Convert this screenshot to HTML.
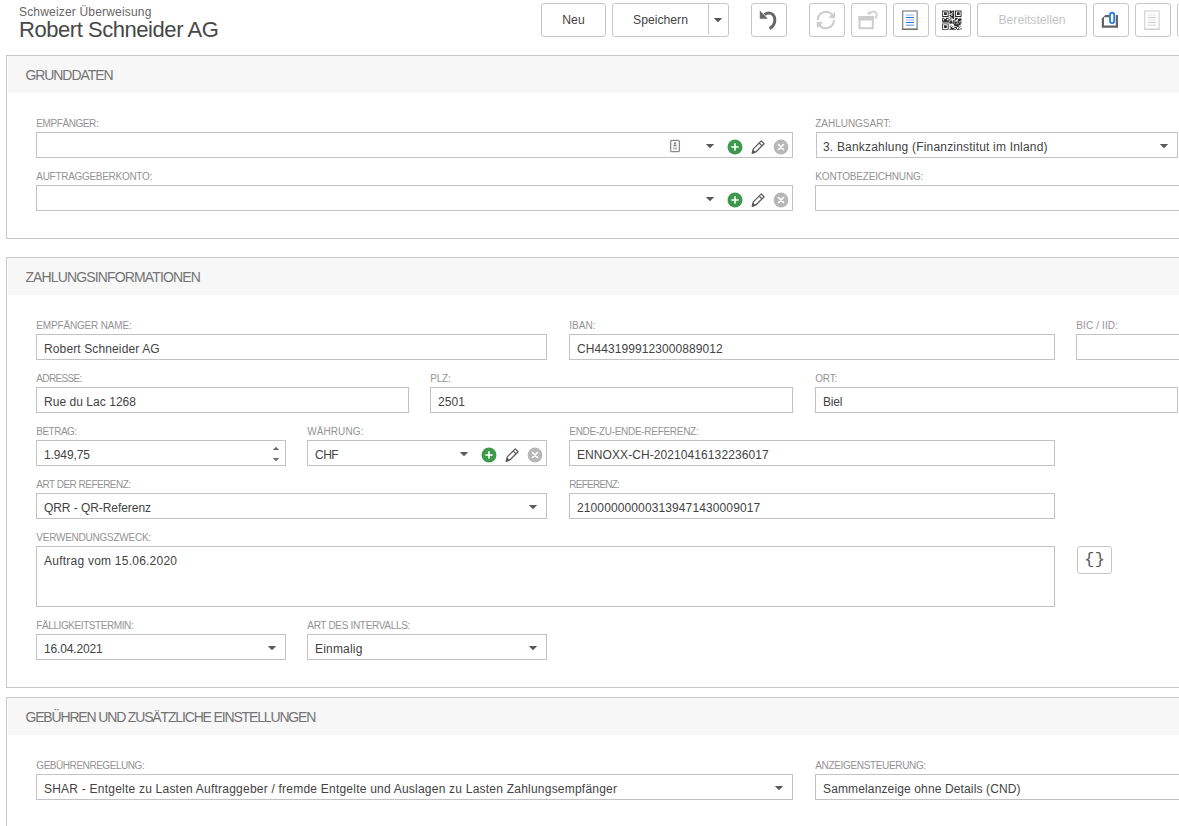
<!DOCTYPE html>
<html lang="de"><head><meta charset="utf-8"><title>Schweizer Überweisung</title>
<style>
html,body{margin:0;padding:0;background:#fff;}
body{width:1179px;height:826px;overflow:hidden;position:relative;font-family:"Liberation Sans",sans-serif;color:#333;}
.abs{position:absolute;}
.sub{position:absolute;left:19px;top:5px;font-size:12px;line-height:14px;color:#666;white-space:nowrap;letter-spacing:0.18px;}
.title{position:absolute;left:19px;top:17px;font-size:22px;line-height:26px;color:#474747;white-space:nowrap;letter-spacing:-0.45px;}
.btn{position:absolute;top:3px;height:32px;border:1px solid #c6c6c6;border-radius:3px;background:#fff;box-sizing:content-box;}
.btn span{position:absolute;left:0;right:0;top:9px;text-align:center;font-size:12.2px;line-height:14px;color:#444;white-space:nowrap;}
.btn.dis span{color:#c4c4c4;}
.btn svg{position:absolute;left:0;top:0;}
.panel{position:absolute;left:6px;width:1300px;border:1px solid #c8c8c8;box-sizing:border-box;background:#fff;}
.ph{position:absolute;left:1px;top:0;right:0;height:37px;background:#f7f7f7;}
.ph span{position:absolute;left:17.4px;top:11px;font-size:14px;line-height:16px;color:#747474;letter-spacing:-0.88px;white-space:nowrap;}
.lbl{position:absolute;font-size:10px;line-height:12px;color:#939393;letter-spacing:-0.72px;white-space:nowrap;}
.inp{position:absolute;height:24px;border:1px solid #c3c3c3;box-sizing:content-box;background:#fff;}
.inp span{position:absolute;left:7px;top:7px;font-size:12px;line-height:14px;color:#434343;white-space:nowrap;letter-spacing:0.2px;}
.ic{position:absolute;overflow:visible;}
</style></head>
<body>
<div class="sub">Schweizer Überweisung</div>
<div class="title">Robert Schneider AG</div>
<div class="btn " style="left:541px;width:63px"><span>Neu</span></div>
<div class="btn" style="left:612px;width:115px"><span style="right:20px">Speichern</span><div class="abs" style="left:95px;top:0;width:1px;height:30px;background:#c6c6c6"></div><svg class="ic" style="left:99.6px;top:12.6px" width="10" height="6" viewBox="0 0 10 6"><path d="M0.8 0.9h8.4L5 5.2z" fill="#555"/></svg></div>
<div class="btn " style="left:751px;width:34px"><svg width="34" height="32" viewBox="0 0 34 32"><path d="M12.6 10.6 C14 9.4 15.4 9 16.8 9 C20.4 9 22.8 12 22.8 16 C22.8 20 20.6 22.8 17.6 24.6" fill="none" stroke="#666" stroke-width="3" stroke-linecap="butt"/><path d="M7.8 6.5 L7.8 14.8 L15.8 14.8 Z" fill="#666"/></svg></div>
<div class="btn " style="left:809px;width:34px"><svg width="34" height="32" viewBox="0 0 34 32"><g fill="none" stroke="#cdcdcd" stroke-width="2"><path d="M7.9 16 A8 8 0 0 1 22.4 11.2"/><path d="M23.9 16 A8 8 0 0 1 9.4 20.8"/></g><path d="M25 8 L25 14.5 L18.5 13.6 Z" fill="#cdcdcd"/><path d="M6.8 24 L6.8 17.5 L13.3 18.4 Z" fill="#cdcdcd"/></svg></div>
<div class="btn " style="left:851px;width:34px"><svg width="34" height="32" viewBox="0 0 34 32"><rect x="7.5" y="13" width="13.3" height="11.2" fill="#fff" stroke="#cdcdcd" stroke-width="2"/><rect x="6.5" y="12" width="15.3" height="4.5" fill="#cdcdcd"/><path d="M17.8 10 A3.6 3.6 0 1 1 23 14.3" fill="none" stroke="#cdcdcd" stroke-width="1.8"/><path d="M15.6 7.2 L16 11 L19.2 9.8 Z" fill="#cdcdcd"/></svg></div>
<div class="btn " style="left:893px;width:34px"><svg width="34" height="32" viewBox="0 0 34 32"><rect x="8.7" y="7" width="14.4" height="18.1" fill="#fff" stroke="#7a7a7a" stroke-width="1.15"/><path d="M8 25.3h15.8" stroke="#666" stroke-width="1"/><g stroke-width="1.1"><path d="M11.8 11h8.2M11.8 16h8.2" stroke="#8db8ec"/><path d="M11.8 13.5h8.2M11.8 18.5h8.2" stroke="#2a74d8"/><path d="M11.8 21.2h8.2" stroke="#5b97e4"/></g></svg></div>
<div class="btn " style="left:935px;width:34px"><svg width="34" height="32" viewBox="0 0 34 32"><path d="M6.20 6.50h0.92v0.92h-0.92zM7.12 6.50h0.92v0.92h-0.92zM8.04 6.50h0.92v0.92h-0.92zM8.96 6.50h0.92v0.92h-0.92zM9.88 6.50h0.92v0.92h-0.92zM10.80 6.50h0.92v0.92h-0.92zM11.72 6.50h0.92v0.92h-0.92zM13.56 6.50h0.92v0.92h-0.92zM14.48 6.50h0.92v0.92h-0.92zM16.32 6.50h0.92v0.92h-0.92zM17.24 6.50h0.92v0.92h-0.92zM19.08 6.50h0.92v0.92h-0.92zM20.00 6.50h0.92v0.92h-0.92zM20.92 6.50h0.92v0.92h-0.92zM21.84 6.50h0.92v0.92h-0.92zM22.76 6.50h0.92v0.92h-0.92zM23.68 6.50h0.92v0.92h-0.92zM24.60 6.50h0.92v0.92h-0.92zM6.20 7.42h0.92v0.92h-0.92zM11.72 7.42h0.92v0.92h-0.92zM13.56 7.42h0.92v0.92h-0.92zM14.48 7.42h0.92v0.92h-0.92zM15.40 7.42h0.92v0.92h-0.92zM16.32 7.42h0.92v0.92h-0.92zM17.24 7.42h0.92v0.92h-0.92zM19.08 7.42h0.92v0.92h-0.92zM24.60 7.42h0.92v0.92h-0.92zM6.20 8.34h0.92v0.92h-0.92zM8.04 8.34h0.92v0.92h-0.92zM8.96 8.34h0.92v0.92h-0.92zM9.88 8.34h0.92v0.92h-0.92zM11.72 8.34h0.92v0.92h-0.92zM13.56 8.34h0.92v0.92h-0.92zM14.48 8.34h0.92v0.92h-0.92zM15.40 8.34h0.92v0.92h-0.92zM17.24 8.34h0.92v0.92h-0.92zM19.08 8.34h0.92v0.92h-0.92zM20.92 8.34h0.92v0.92h-0.92zM21.84 8.34h0.92v0.92h-0.92zM22.76 8.34h0.92v0.92h-0.92zM24.60 8.34h0.92v0.92h-0.92zM6.20 9.26h0.92v0.92h-0.92zM8.04 9.26h0.92v0.92h-0.92zM8.96 9.26h0.92v0.92h-0.92zM9.88 9.26h0.92v0.92h-0.92zM11.72 9.26h0.92v0.92h-0.92zM13.56 9.26h0.92v0.92h-0.92zM16.32 9.26h0.92v0.92h-0.92zM17.24 9.26h0.92v0.92h-0.92zM19.08 9.26h0.92v0.92h-0.92zM20.92 9.26h0.92v0.92h-0.92zM21.84 9.26h0.92v0.92h-0.92zM22.76 9.26h0.92v0.92h-0.92zM24.60 9.26h0.92v0.92h-0.92zM6.20 10.18h0.92v0.92h-0.92zM8.04 10.18h0.92v0.92h-0.92zM8.96 10.18h0.92v0.92h-0.92zM9.88 10.18h0.92v0.92h-0.92zM11.72 10.18h0.92v0.92h-0.92zM14.48 10.18h0.92v0.92h-0.92zM16.32 10.18h0.92v0.92h-0.92zM17.24 10.18h0.92v0.92h-0.92zM19.08 10.18h0.92v0.92h-0.92zM20.92 10.18h0.92v0.92h-0.92zM21.84 10.18h0.92v0.92h-0.92zM22.76 10.18h0.92v0.92h-0.92zM24.60 10.18h0.92v0.92h-0.92zM6.20 11.10h0.92v0.92h-0.92zM11.72 11.10h0.92v0.92h-0.92zM13.56 11.10h0.92v0.92h-0.92zM14.48 11.10h0.92v0.92h-0.92zM16.32 11.10h0.92v0.92h-0.92zM17.24 11.10h0.92v0.92h-0.92zM19.08 11.10h0.92v0.92h-0.92zM24.60 11.10h0.92v0.92h-0.92zM6.20 12.02h0.92v0.92h-0.92zM7.12 12.02h0.92v0.92h-0.92zM8.04 12.02h0.92v0.92h-0.92zM8.96 12.02h0.92v0.92h-0.92zM9.88 12.02h0.92v0.92h-0.92zM10.80 12.02h0.92v0.92h-0.92zM11.72 12.02h0.92v0.92h-0.92zM14.48 12.02h0.92v0.92h-0.92zM15.40 12.02h0.92v0.92h-0.92zM16.32 12.02h0.92v0.92h-0.92zM17.24 12.02h0.92v0.92h-0.92zM19.08 12.02h0.92v0.92h-0.92zM20.00 12.02h0.92v0.92h-0.92zM20.92 12.02h0.92v0.92h-0.92zM21.84 12.02h0.92v0.92h-0.92zM22.76 12.02h0.92v0.92h-0.92zM23.68 12.02h0.92v0.92h-0.92zM24.60 12.02h0.92v0.92h-0.92zM13.56 12.94h0.92v0.92h-0.92zM15.40 12.94h0.92v0.92h-0.92zM16.32 12.94h0.92v0.92h-0.92zM17.24 12.94h0.92v0.92h-0.92zM6.20 13.86h0.92v0.92h-0.92zM7.12 13.86h0.92v0.92h-0.92zM9.88 13.86h0.92v0.92h-0.92zM10.80 13.86h0.92v0.92h-0.92zM11.72 13.86h0.92v0.92h-0.92zM14.48 13.86h0.92v0.92h-0.92zM16.32 13.86h0.92v0.92h-0.92zM17.24 13.86h0.92v0.92h-0.92zM19.08 13.86h0.92v0.92h-0.92zM20.00 13.86h0.92v0.92h-0.92zM20.92 13.86h0.92v0.92h-0.92zM23.68 13.86h0.92v0.92h-0.92zM6.20 14.78h0.92v0.92h-0.92zM8.04 14.78h0.92v0.92h-0.92zM8.96 14.78h0.92v0.92h-0.92zM9.88 14.78h0.92v0.92h-0.92zM12.64 14.78h0.92v0.92h-0.92zM14.48 14.78h0.92v0.92h-0.92zM19.08 14.78h0.92v0.92h-0.92zM20.00 14.78h0.92v0.92h-0.92zM21.84 14.78h0.92v0.92h-0.92zM22.76 14.78h0.92v0.92h-0.92zM23.68 14.78h0.92v0.92h-0.92zM24.60 14.78h0.92v0.92h-0.92zM6.20 15.70h0.92v0.92h-0.92zM8.04 15.70h0.92v0.92h-0.92zM8.96 15.70h0.92v0.92h-0.92zM9.88 15.70h0.92v0.92h-0.92zM11.72 15.70h0.92v0.92h-0.92zM12.64 15.70h0.92v0.92h-0.92zM13.56 15.70h0.92v0.92h-0.92zM17.24 15.70h0.92v0.92h-0.92zM18.16 15.70h0.92v0.92h-0.92zM19.08 15.70h0.92v0.92h-0.92zM21.84 15.70h0.92v0.92h-0.92zM22.76 15.70h0.92v0.92h-0.92zM23.68 15.70h0.92v0.92h-0.92zM24.60 15.70h0.92v0.92h-0.92zM6.20 16.62h0.92v0.92h-0.92zM7.12 16.62h0.92v0.92h-0.92zM8.04 16.62h0.92v0.92h-0.92zM8.96 16.62h0.92v0.92h-0.92zM9.88 16.62h0.92v0.92h-0.92zM10.80 16.62h0.92v0.92h-0.92zM11.72 16.62h0.92v0.92h-0.92zM14.48 16.62h0.92v0.92h-0.92zM15.40 16.62h0.92v0.92h-0.92zM17.24 16.62h0.92v0.92h-0.92zM21.84 16.62h0.92v0.92h-0.92zM22.76 16.62h0.92v0.92h-0.92zM23.68 16.62h0.92v0.92h-0.92zM6.20 17.54h0.92v0.92h-0.92zM7.12 17.54h0.92v0.92h-0.92zM8.04 17.54h0.92v0.92h-0.92zM8.96 17.54h0.92v0.92h-0.92zM9.88 17.54h0.92v0.92h-0.92zM10.80 17.54h0.92v0.92h-0.92zM11.72 17.54h0.92v0.92h-0.92zM12.64 17.54h0.92v0.92h-0.92zM13.56 17.54h0.92v0.92h-0.92zM14.48 17.54h0.92v0.92h-0.92zM15.40 17.54h0.92v0.92h-0.92zM17.24 17.54h0.92v0.92h-0.92zM18.16 17.54h0.92v0.92h-0.92zM19.08 17.54h0.92v0.92h-0.92zM20.00 17.54h0.92v0.92h-0.92zM20.92 17.54h0.92v0.92h-0.92zM21.84 17.54h0.92v0.92h-0.92zM24.60 17.54h0.92v0.92h-0.92zM13.56 18.46h0.92v0.92h-0.92zM14.48 18.46h0.92v0.92h-0.92zM15.40 18.46h0.92v0.92h-0.92zM16.32 18.46h0.92v0.92h-0.92zM17.24 18.46h0.92v0.92h-0.92zM19.08 18.46h0.92v0.92h-0.92zM20.00 18.46h0.92v0.92h-0.92zM21.84 18.46h0.92v0.92h-0.92zM22.76 18.46h0.92v0.92h-0.92zM23.68 18.46h0.92v0.92h-0.92zM24.60 18.46h0.92v0.92h-0.92zM6.20 19.38h0.92v0.92h-0.92zM7.12 19.38h0.92v0.92h-0.92zM8.04 19.38h0.92v0.92h-0.92zM8.96 19.38h0.92v0.92h-0.92zM9.88 19.38h0.92v0.92h-0.92zM10.80 19.38h0.92v0.92h-0.92zM11.72 19.38h0.92v0.92h-0.92zM13.56 19.38h0.92v0.92h-0.92zM17.24 19.38h0.92v0.92h-0.92zM18.16 19.38h0.92v0.92h-0.92zM19.08 19.38h0.92v0.92h-0.92zM20.92 19.38h0.92v0.92h-0.92zM22.76 19.38h0.92v0.92h-0.92zM23.68 19.38h0.92v0.92h-0.92zM6.20 20.30h0.92v0.92h-0.92zM11.72 20.30h0.92v0.92h-0.92zM18.16 20.30h0.92v0.92h-0.92zM19.08 20.30h0.92v0.92h-0.92zM20.00 20.30h0.92v0.92h-0.92zM20.92 20.30h0.92v0.92h-0.92zM21.84 20.30h0.92v0.92h-0.92zM22.76 20.30h0.92v0.92h-0.92zM23.68 20.30h0.92v0.92h-0.92zM6.20 21.22h0.92v0.92h-0.92zM8.04 21.22h0.92v0.92h-0.92zM8.96 21.22h0.92v0.92h-0.92zM9.88 21.22h0.92v0.92h-0.92zM11.72 21.22h0.92v0.92h-0.92zM14.48 21.22h0.92v0.92h-0.92zM18.16 21.22h0.92v0.92h-0.92zM19.08 21.22h0.92v0.92h-0.92zM20.00 21.22h0.92v0.92h-0.92zM20.92 21.22h0.92v0.92h-0.92zM21.84 21.22h0.92v0.92h-0.92zM6.20 22.14h0.92v0.92h-0.92zM8.04 22.14h0.92v0.92h-0.92zM8.96 22.14h0.92v0.92h-0.92zM9.88 22.14h0.92v0.92h-0.92zM11.72 22.14h0.92v0.92h-0.92zM13.56 22.14h0.92v0.92h-0.92zM16.32 22.14h0.92v0.92h-0.92zM20.92 22.14h0.92v0.92h-0.92zM21.84 22.14h0.92v0.92h-0.92zM23.68 22.14h0.92v0.92h-0.92zM6.20 23.06h0.92v0.92h-0.92zM8.04 23.06h0.92v0.92h-0.92zM8.96 23.06h0.92v0.92h-0.92zM9.88 23.06h0.92v0.92h-0.92zM11.72 23.06h0.92v0.92h-0.92zM14.48 23.06h0.92v0.92h-0.92zM15.40 23.06h0.92v0.92h-0.92zM18.16 23.06h0.92v0.92h-0.92zM19.08 23.06h0.92v0.92h-0.92zM20.00 23.06h0.92v0.92h-0.92zM22.76 23.06h0.92v0.92h-0.92zM6.20 23.98h0.92v0.92h-0.92zM11.72 23.98h0.92v0.92h-0.92zM14.48 23.98h0.92v0.92h-0.92zM15.40 23.98h0.92v0.92h-0.92zM16.32 23.98h0.92v0.92h-0.92zM17.24 23.98h0.92v0.92h-0.92zM20.00 23.98h0.92v0.92h-0.92zM21.84 23.98h0.92v0.92h-0.92zM24.60 23.98h0.92v0.92h-0.92zM6.20 24.90h0.92v0.92h-0.92zM7.12 24.90h0.92v0.92h-0.92zM8.04 24.90h0.92v0.92h-0.92zM8.96 24.90h0.92v0.92h-0.92zM9.88 24.90h0.92v0.92h-0.92zM10.80 24.90h0.92v0.92h-0.92zM11.72 24.90h0.92v0.92h-0.92zM13.56 24.90h0.92v0.92h-0.92zM14.48 24.90h0.92v0.92h-0.92zM15.40 24.90h0.92v0.92h-0.92zM16.32 24.90h0.92v0.92h-0.92zM17.24 24.90h0.92v0.92h-0.92zM18.16 24.90h0.92v0.92h-0.92zM19.08 24.90h0.92v0.92h-0.92zM20.92 24.90h0.92v0.92h-0.92zM21.84 24.90h0.92v0.92h-0.92zM22.76 24.90h0.92v0.92h-0.92zM24.60 24.90h0.92v0.92h-0.92z" fill="#2c2c2c"/></svg></div>
<div class="btn dis" style="left:977px;width:108px"><span>Bereitstellen</span></div>
<div class="btn " style="left:1093px;width:34px"><svg width="34" height="32" viewBox="0 0 34 32"><path d="M8.9 14.5 V22.7 H22.9 V11" fill="none" stroke="#626262" stroke-width="2.2" stroke-linejoin="miter"/><path d="M7.8 14.6 L11.4 11 H15.4 V13.2 H10 V15.4 H7.8 Z" fill="#626262"/><rect x="16" y="8.8" width="4.2" height="10.3" rx="2.1" fill="#fff" stroke="#2f80dc" stroke-width="1.9"/></svg></div>
<div class="btn " style="left:1135px;width:34px"><svg width="34" height="32" viewBox="0 0 34 32"><rect x="8.7" y="7" width="14.4" height="18.1" fill="#fff" stroke="#d2d2d2" stroke-width="1.15"/><path d="M8 25.3h15.8" stroke="#cfcfcf" stroke-width="1"/><g stroke-width="1.1"><path d="M11.8 11h8.2M11.8 16h8.2" stroke="#e2e2e2"/><path d="M11.8 13.5h8.2M11.8 18.5h8.2" stroke="#cecece"/><path d="M11.8 21.2h8.2" stroke="#d8d8d8"/></g></svg></div>
<div class="btn " style="left:1177px;width:34px"></div>
<div class="panel" style="top:55px;height:184px"><div class="ph"><span style="letter-spacing:-1.061px">GRUNDDATEN</span></div><div class="lbl" style="left:29.3px;top:62px;letter-spacing:-0.414px">EMPFÄNGER:</div><div class="inp" style="left:29px;top:76px;width:755px;height:24px"><svg class="ic" style="left:632px;top:4.800000000000001px" width="12" height="16" viewBox="0 0 12 16"><rect x="1.6" y="2.4" width="8.8" height="11.2" rx="1.2" fill="#fafafa" stroke="#8c8c8c" stroke-width="1.3"/><circle cx="6" cy="5.5" r="1.15" fill="#8a8a8a"/><path d="M4.2 8.2c0-2.3 3.6-2.3 3.6 0z" fill="#8a8a8a"/><rect x="4.1" y="9.6" width="3.8" height="1.7" fill="#b0b0b0"/></svg><svg class="ic" style="left:668px;top:10.2px" width="10" height="6" viewBox="0 0 10 6"><path d="M0.8 0.9h8.4L5 5.2z" fill="#5a5a5a"/></svg><svg class="ic" style="left:690.3px;top:5.5px" width="16" height="16" viewBox="0 0 16 16"><circle cx="8" cy="8" r="7.5" fill="#3d9a4a"/><path d="M8 4.9v6.2M4.9 8h6.2" stroke="#fff" stroke-width="1.6" stroke-linecap="round"/></svg><svg class="ic" style="left:712.6px;top:5.5px" width="16" height="16" viewBox="0 0 16 16"><path d="M11.3 1.9L14.1 4.7 6.1 12.7 2.2 14.3 3.3 9.9z" fill="none" stroke="#595959" stroke-width="1.25" stroke-linejoin="round"/><path d="M9.2 4.0l2.8 2.8" stroke="#595959" stroke-width="1.1"/><path d="M2.2 14.3l0.9-3.3 2.5 2.3z" fill="#595959" stroke="#595959" stroke-width="0.6"/></svg><svg class="ic" style="left:736.4px;top:5.6px" width="16" height="16" viewBox="0 0 16 16"><circle cx="8" cy="8" r="7.4" fill="#b7b7b7"/><path d="M5.5 5.5l5 5M10.5 5.5l-5 5" stroke="#fff" stroke-width="1.7" stroke-linecap="round"/></svg></div><div class="lbl" style="left:808.3px;top:62px;letter-spacing:-0.032px">ZAHLUNGSART:</div><div class="inp" style="left:809px;top:76px;width:360px;height:24px"><span style="letter-spacing:0.193px;left:6px">3. Bankzahlung (Finanzinstitut im Inland)</span><svg class="ic" style="left:341.9px;top:10.2px" width="10" height="6" viewBox="0 0 10 6"><path d="M0.8 0.9h8.4L5 5.2z" fill="#5a5a5a"/></svg></div><div class="lbl" style="left:29.3px;top:115px;letter-spacing:-0.297px">AUFTRAGGEBERKONTO:</div><div class="inp" style="left:29px;top:129px;width:755px;height:24px"><svg class="ic" style="left:668px;top:10.2px" width="10" height="6" viewBox="0 0 10 6"><path d="M0.8 0.9h8.4L5 5.2z" fill="#5a5a5a"/></svg><svg class="ic" style="left:690.3px;top:5.5px" width="16" height="16" viewBox="0 0 16 16"><circle cx="8" cy="8" r="7.5" fill="#3d9a4a"/><path d="M8 4.9v6.2M4.9 8h6.2" stroke="#fff" stroke-width="1.6" stroke-linecap="round"/></svg><svg class="ic" style="left:712.6px;top:5.5px" width="16" height="16" viewBox="0 0 16 16"><path d="M11.3 1.9L14.1 4.7 6.1 12.7 2.2 14.3 3.3 9.9z" fill="none" stroke="#595959" stroke-width="1.25" stroke-linejoin="round"/><path d="M9.2 4.0l2.8 2.8" stroke="#595959" stroke-width="1.1"/><path d="M2.2 14.3l0.9-3.3 2.5 2.3z" fill="#595959" stroke="#595959" stroke-width="0.6"/></svg><svg class="ic" style="left:736.4px;top:5.6px" width="16" height="16" viewBox="0 0 16 16"><circle cx="8" cy="8" r="7.4" fill="#b7b7b7"/><path d="M5.5 5.5l5 5M10.5 5.5l-5 5" stroke="#fff" stroke-width="1.7" stroke-linecap="round"/></svg></div><div class="lbl" style="left:808.3px;top:115px;letter-spacing:-0.184px">KONTOBEZEICHNUNG:</div><div class="inp" style="left:808px;top:129px;width:434px;height:24px"></div></div>
<div class="panel" style="top:257px;height:431px"><div class="ph"><span style="letter-spacing:-0.862px">ZAHLUNGSINFORMATIONEN</span></div><div class="lbl" style="left:29.3px;top:62px;letter-spacing:-0.171px">EMPFÄNGER NAME:</div><div class="inp" style="left:29px;top:76px;width:509px;height:24px"><span style="letter-spacing:0.122px;">Robert Schneider AG</span></div><div class="lbl" style="left:562.3px;top:62px;letter-spacing:0.019px">IBAN:</div><div class="inp" style="left:562px;top:76px;width:484px;height:24px"><span style="letter-spacing:0.083px;">CH4431999123000889012</span></div><div class="lbl" style="left:1069.3px;top:62px;letter-spacing:0.126px">BIC / IID:</div><div class="inp" style="left:1069px;top:76px;width:173px;height:24px"></div><div class="lbl" style="left:29.3px;top:115px;letter-spacing:-0.654px">ADRESSE:</div><div class="inp" style="left:29px;top:129px;width:371px;height:24px"><span style="letter-spacing:0.042px;">Rue du Lac 1268</span></div><div class="lbl" style="left:423.3px;top:115px;letter-spacing:-0.242px">PLZ:</div><div class="inp" style="left:423px;top:129px;width:361px;height:24px"><span style="letter-spacing:0.099px;">2501</span></div><div class="lbl" style="left:808.3px;top:115px;letter-spacing:-0.236px">ORT:</div><div class="inp" style="left:808px;top:129px;width:361px;height:24px"><span style="letter-spacing:-0.205px;">Biel</span></div><div class="lbl" style="left:29.3px;top:168px;letter-spacing:-0.518px">BETRAG:</div><div class="inp" style="left:29px;top:182px;width:248px;height:24px"><span style="letter-spacing:-0.103px;">1.949,75</span><svg class="ic" style="left:235px;top:4px" width="8" height="18" viewBox="0 0 8 18"><path d="M0.7 4.9L4 1.7 7.3 4.9z" fill="#6e6e6e"/><path d="M0.7 13L4 16.2 7.3 13z" fill="#6e6e6e"/></svg></div><div class="lbl" style="left:300.3px;top:168px;letter-spacing:0.062px">WÄHRUNG:</div><div class="inp" style="left:300px;top:182px;width:238px;height:24px"><span style="letter-spacing:-0.536px;">CHF</span><svg class="ic" style="left:151px;top:10.2px" width="10" height="6" viewBox="0 0 10 6"><path d="M0.8 0.9h8.4L5 5.2z" fill="#5a5a5a"/></svg><svg class="ic" style="left:173.3px;top:5.5px" width="16" height="16" viewBox="0 0 16 16"><circle cx="8" cy="8" r="7.5" fill="#3d9a4a"/><path d="M8 4.9v6.2M4.9 8h6.2" stroke="#fff" stroke-width="1.6" stroke-linecap="round"/></svg><svg class="ic" style="left:195.6px;top:5.5px" width="16" height="16" viewBox="0 0 16 16"><path d="M11.3 1.9L14.1 4.7 6.1 12.7 2.2 14.3 3.3 9.9z" fill="none" stroke="#595959" stroke-width="1.25" stroke-linejoin="round"/><path d="M9.2 4.0l2.8 2.8" stroke="#595959" stroke-width="1.1"/><path d="M2.2 14.3l0.9-3.3 2.5 2.3z" fill="#595959" stroke="#595959" stroke-width="0.6"/></svg><svg class="ic" style="left:219.4px;top:5.6px" width="16" height="16" viewBox="0 0 16 16"><circle cx="8" cy="8" r="7.4" fill="#b7b7b7"/><path d="M5.5 5.5l5 5M10.5 5.5l-5 5" stroke="#fff" stroke-width="1.7" stroke-linecap="round"/></svg></div><div class="lbl" style="left:562.3px;top:168px;letter-spacing:-0.293px">ENDE-ZU-ENDE-REFERENZ:</div><div class="inp" style="left:562px;top:182px;width:484px;height:24px"><span style="letter-spacing:0.082px;">ENNOXX-CH-20210416132236017</span></div><div class="lbl" style="left:29.3px;top:221px;letter-spacing:-0.512px">ART DER REFERENZ:</div><div class="inp" style="left:29px;top:235px;width:509px;height:24px"><span style="letter-spacing:-0.064px;">QRR - QR-Referenz</span><svg class="ic" style="left:490.9px;top:10.2px" width="10" height="6" viewBox="0 0 10 6"><path d="M0.8 0.9h8.4L5 5.2z" fill="#5a5a5a"/></svg></div><div class="lbl" style="left:562.3px;top:221px;letter-spacing:-0.759px">REFERENZ:</div><div class="inp" style="left:562px;top:235px;width:484px;height:24px"><span style="letter-spacing:0.115px;">210000000003139471430009017</span></div><div class="lbl" style="left:29.3px;top:274px;letter-spacing:-0.245px">VERWENDUNGSZWECK:</div><div class="inp" style="left:29px;top:288px;width:1017px;height:59px"><span style="letter-spacing:0.234px;">Auftrag vom 15.06.2020</span></div><div class="abs" style="left:1070px;top:288px;width:33px;height:26px;border:1px solid #c6c6c6;border-radius:3px;"><span class="abs" style="left:0;right:0;top:3px;text-align:center;font-size:17px;line-height:19px;color:#5a5a5a;letter-spacing:0.3px;text-indent:0.3px;font-family:'Liberation Mono',monospace">{}</span></div><div class="lbl" style="left:29.3px;top:362px;letter-spacing:-0.416px">FÄLLIGKEITSTERMIN:</div><div class="inp" style="left:29px;top:376px;width:248px;height:24px"><span style="letter-spacing:-0.162px;">16.04.2021</span><svg class="ic" style="left:229.9px;top:10.2px" width="10" height="6" viewBox="0 0 10 6"><path d="M0.8 0.9h8.4L5 5.2z" fill="#5a5a5a"/></svg></div><div class="lbl" style="left:300.3px;top:362px;letter-spacing:-0.319px">ART DES INTERVALLS:</div><div class="inp" style="left:300px;top:376px;width:238px;height:24px"><span style="letter-spacing:0.196px;">Einmalig</span><svg class="ic" style="left:219.9px;top:10.2px" width="10" height="6" viewBox="0 0 10 6"><path d="M0.8 0.9h8.4L5 5.2z" fill="#5a5a5a"/></svg></div></div>
<div class="panel" style="top:697px;height:204px"><div class="ph"><span style="letter-spacing:-1.155px">GEBÜHREN UND ZUSÄTZLICHE EINSTELLUNGEN</span></div><div class="lbl" style="left:29.3px;top:62px;letter-spacing:-0.449px">GEBÜHRENREGELUNG:</div><div class="inp" style="left:29px;top:76px;width:755px;height:24px"><span style="letter-spacing:0.222px;">SHAR - Entgelte zu Lasten Auftraggeber / fremde Entgelte und Auslagen zu Lasten Zahlungsempfänger</span><svg class="ic" style="left:736.9px;top:10.2px" width="10" height="6" viewBox="0 0 10 6"><path d="M0.8 0.9h8.4L5 5.2z" fill="#5a5a5a"/></svg></div><div class="lbl" style="left:808.3px;top:62px;letter-spacing:-0.346px">ANZEIGENSTEUERUNG:</div><div class="inp" style="left:808px;top:76px;width:434px;height:24px"><span style="letter-spacing:0.135px;">Sammelanzeige ohne Details (CND)</span></div></div>
</body></html>
